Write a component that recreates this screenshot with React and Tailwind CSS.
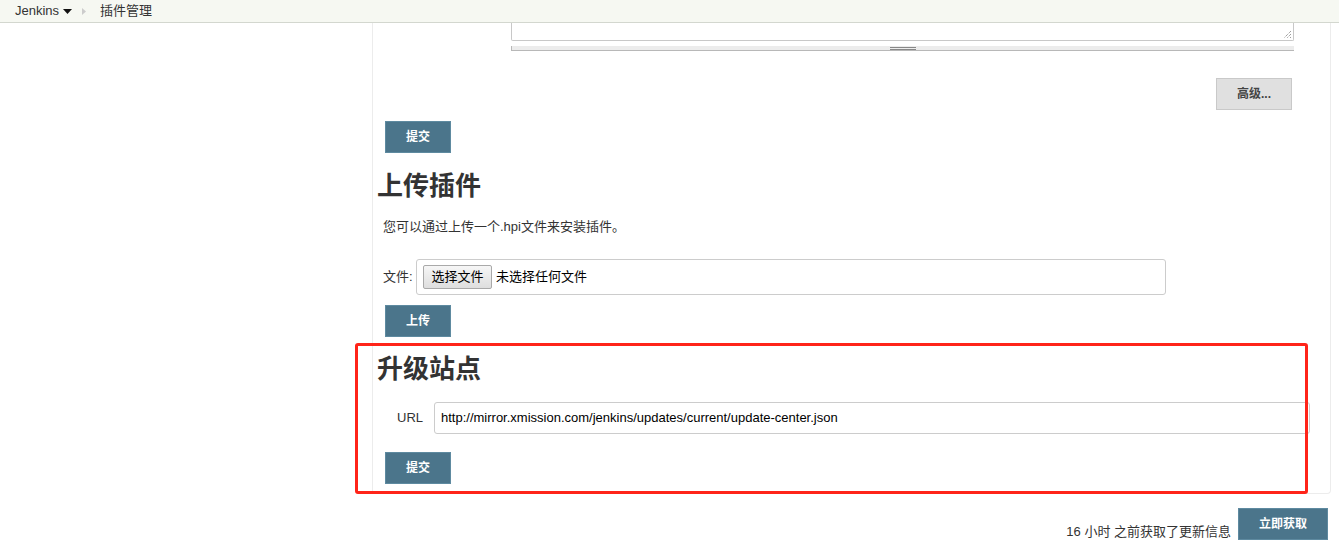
import React from 'react'

const font = { fontFamily: '"Liberation Sans", "Noto Sans CJK SC", sans-serif' }

function BlueButton({ children, className = '' }) {
  return (
    <div className={`h-[32px] flex items-center justify-center bg-[#4b758b] border border-[#5e8aa0] text-white text-[12px] font-bold ${className}`}>
      {children}
    </div>
  )
}

export default function App() {
  return (
    <div className="relative w-full h-[548px] overflow-hidden bg-white text-[#333]" style={font}>
      {/* Breadcrumb */}
      <div className="h-[23px] bg-[#f6f8f2] border-b border-[#d3d7cf] flex items-center pl-[15px] text-[13px] text-[#333]">
        <span>Jenkins</span>
        <svg className="ml-[4px] mt-[1px]" width="9" height="5" viewBox="0 0 9 5">
          <path d="M0 0 H9 L4.5 5 Z" fill="#111" />
        </svg>
        <svg className="ml-[10px] mt-[1px]" width="4" height="7" viewBox="0 0 4 7">
          <path d="M0 0 L4 3.5 L0 7 Z" fill="#ccc" />
        </svg>
        <span className="ml-[14px]">插件管理</span>
      </div>

      <div className="flex">
        <div className="w-[372px] shrink-0" />

        {/* Main panel */}
        <div className="w-[959px] border-l border-r border-b border-[#ececec] rounded-b-[4px] pb-[9px] flex flex-col">
          {/* Textarea tail */}
          <div className="ml-[138px] w-[783px] h-[18px] border-l border-r border-b border-[#c8c8c8] rounded-b-[2px] relative">
            <svg className="absolute right-[1px] bottom-[1px]" width="10" height="10" viewBox="0 0 10 10">
              <path d="M9 2 L2 9 M9 5 L5 9 M9 8 L8 9" stroke="#777" strokeWidth="1" strokeDasharray="1 1" />
            </svg>
          </div>
          <div className="ml-[138px] mt-[5px] w-[783px] h-[5px] bg-[#ececec] border-l border-b border-[#b8b8b8] flex justify-center items-center">
            <div className="w-[26px] h-[3px] border-t border-b border-[#888]" />
          </div>

          <div className="mt-[27px] w-[919px] flex justify-end">
            <div className="w-[76px] h-[32px] flex items-center justify-center bg-[#e0e0e0] border border-[#c9c9c9] text-[#444] text-[12px] font-bold">
              高级...
            </div>
          </div>

          <BlueButton className="ml-[12px] mt-[11px] w-[66px]">提交</BlueButton>

          <h1 className="ml-[4px] mt-[18px] text-[26px] leading-[30px] font-bold text-[#333]">上传插件</h1>
          <p className="ml-[10px] mt-[17px] text-[13px] leading-[18px]">您可以通过上传一个.hpi文件来安装插件。</p>

          <div className="ml-[10px] mt-[23px] flex items-center text-[13px]">
            <span className="w-[33px]">文件:</span>
            <div className="w-[750px] h-[36px] border border-[#ccc] rounded-[3px] flex items-center pl-[6px]">
              <div className="h-[24px] w-[69px] flex items-center justify-center border border-[#a9a9a9] rounded-[2px] bg-gradient-to-b from-[#f6f6f6] to-[#dedede] text-[13px] text-black">
                选择文件
              </div>
              <span className="ml-[4px] text-black">未选择任何文件</span>
            </div>
          </div>

          <BlueButton className="ml-[12px] mt-[10px] w-[66px]">上传</BlueButton>

          <h1 className="ml-[4px] mt-[17px] text-[26px] leading-[30px] font-bold text-[#333]">升级站点</h1>

          <div className="mt-[18px] flex items-center text-[13px]">
            <span className="ml-[24px] w-[37px]">URL</span>
            <div className="w-[876px] h-[32px] border border-[#ccc] rounded-[3px] flex items-center pl-[6px] text-black">
              http://mirror.xmission.com/jenkins/updates/current/update-center.json
            </div>
          </div>

          <BlueButton className="ml-[12px] mt-[18px] w-[66px]">提交</BlueButton>
        </div>
      </div>

      {/* Footer row */}
      <div className="mt-[14px] w-[1328px] flex justify-end items-end">
        <span className="text-[13px] leading-[16px] text-[#333] mr-[7px]">16 小时 之前获取了更新信息</span>
        <BlueButton className="w-[90px]">立即获取</BlueButton>
      </div>

      {/* Annotation box */}
      <div className="absolute left-[355px] top-[343px] w-[953px] h-[151px] border-[3px] border-[#ff2419] rounded-[3px] pointer-events-none" />
    </div>
  )
}
